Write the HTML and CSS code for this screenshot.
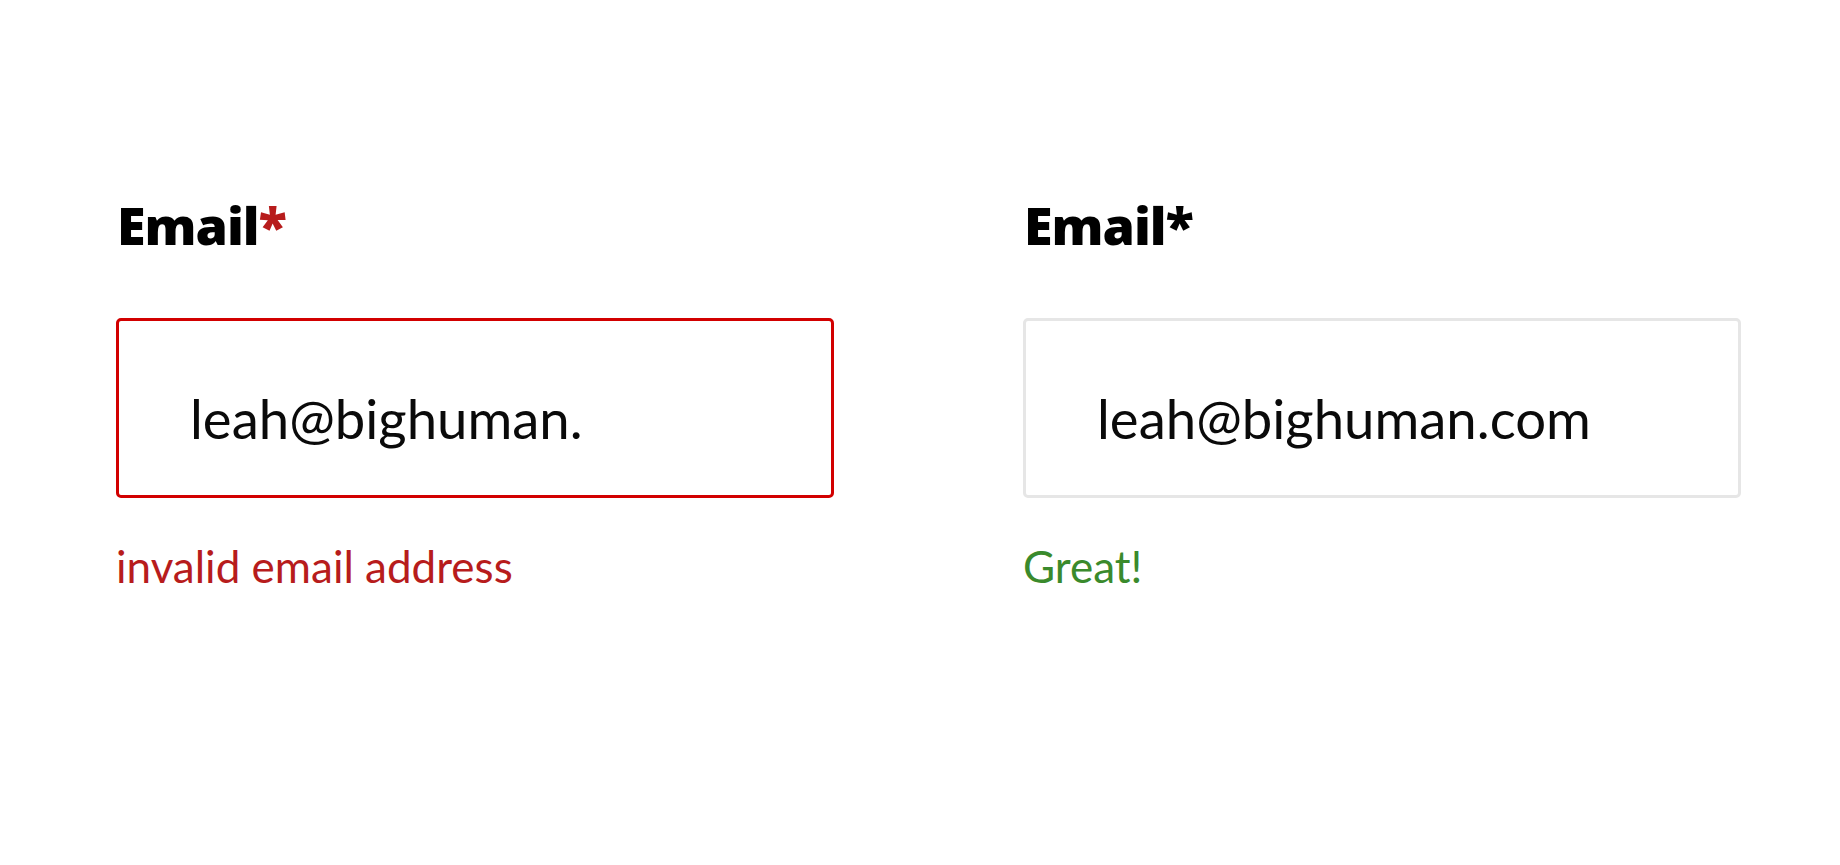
FILE: index.html
```html
<!DOCTYPE html>
<html lang="en">
<head>
<meta charset="utf-8">
<title>Email fields</title>
<link rel="stylesheet" href="styles.css">
</head>
<body>
<main class="page">
  <div class="group">
    <label class="label">Email<span class="req req-error">*</span></label>
    <div class="field field-error"><span class="value">leah@bighuman.</span></div>
    <p class="hint hint-error">invalid email address</p>
  </div>
  <div class="group">
    <label class="label">Email<span class="req">*</span></label>
    <div class="field"><span class="value">leah@bighuman.com</span></div>
    <p class="hint hint-ok">Great!</p>
  </div>
</main>
</body>
</html>
```
FILE: styles.css
```css
html, body {
  margin: 0;
  padding: 0;
  background: #ffffff;
}
body {
  font-family: Lato, "Open Sans", sans-serif;
  color: #000;
}
.page {
  display: grid;
  grid-template-columns: 718px 718px;
  column-gap: 189px;
  padding: 195px 0 0 116px;
}
.group {
  display: flex;
  flex-direction: column;
}
.label {
  display: block;
  font-family: "Open Sans", Lato, sans-serif;
  font-size: 52px;
  line-height: 60px;
  font-weight: 800;
  letter-spacing: -1px;
  margin: 0 0 63px 1px;
}
.req {
  color: #000;
}
.req-error {
  color: #b71c1c;
}
.field {
  box-sizing: border-box;
  height: 180px;
  border: 3px solid #e6e6e6;
  border-radius: 5px;
  display: flex;
  align-items: center;
  padding: 20px 0 0 71px;
}
.field-error {
  border-color: #d20000;
}
.value {
  font-size: 54.5px;
  line-height: 62px;
  color: #0a0a0a;
}
.hint {
  margin: 42px 0 0 0;
  font-size: 44px;
  line-height: 52px;
}
.hint-error {
  color: #b71c1c;
}
.hint-ok {
  color: #3a8a2c;
}
```
